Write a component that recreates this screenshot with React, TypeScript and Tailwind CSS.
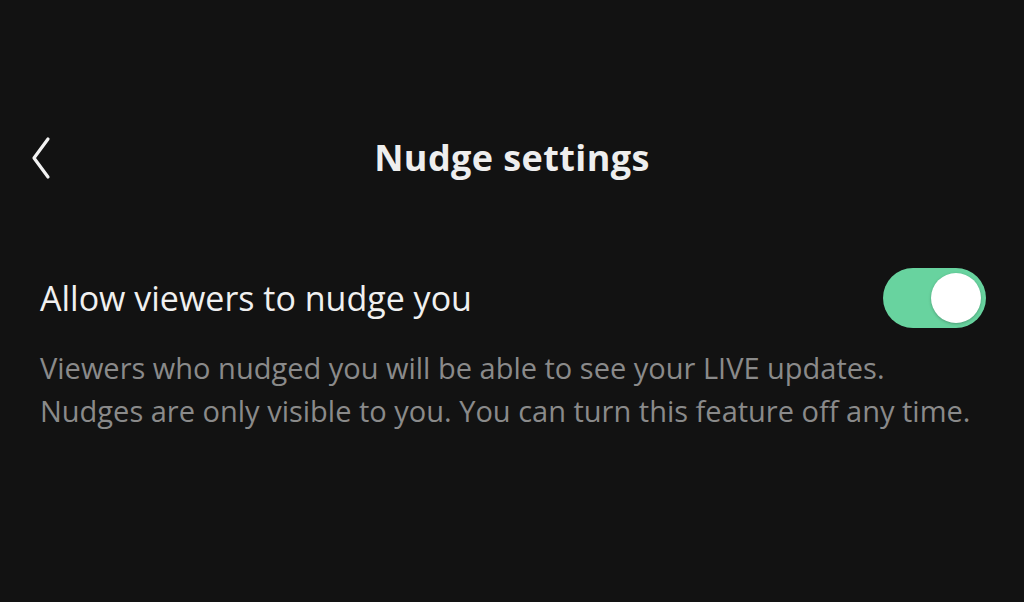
import { useState } from 'react'

const Toggle = ({ on, onChange }: { on: boolean; onChange: (v: boolean) => void }) => (
	<button
		onClick={() => onChange(!on)}
		className={`flex items-center w-[103px] h-[60px] rounded-full px-[5px] shrink-0 ${on ? 'bg-[#68d39f] justify-end' : 'bg-[#3a3a3a] justify-start'}`}
	>
		<span className="block w-[50px] h-[50px] rounded-full bg-white shadow-[0_1px_3px_rgba(0,0,0,0.25)]" />
	</button>
)

export default function App() {
	const [allow, setAllow] = useState(true)

	return (
		<div className="w-[1024px] h-[602px] bg-[#121212] text-white font-['Open_Sans',sans-serif] flex flex-col">
			<div className="grid grid-cols-[1fr_auto_1fr] items-center h-[80px] mt-[118px] px-[31px]">
				<button className="w-[20px] h-[44px]">
					<svg viewBox="0 0 20 44" className="w-full h-full" fill="none" stroke="#f2f2f2" strokeWidth="3.2" strokeLinecap="round" strokeLinejoin="round">
						<path d="M17 3 L3 22 L17 41" />
					</svg>
				</button>
				<h1 className="text-[36px] font-bold tracking-[0.4px] text-[#eeeeee]">Nudge settings</h1>
				<div />
			</div>
			<div className="pl-[40px] pr-[38px] flex flex-col">
				<div className="flex items-center justify-between mt-[70px]">
					<span className="text-[34px] text-[#f0f0f0]">Allow viewers to nudge you</span>
					<Toggle on={allow} onChange={setAllow} />
				</div>
				<p className="mt-[18px] text-[29px] leading-[43px] text-[#8a8a8a]">
					Viewers who nudged you will be able to see your LIVE updates.
					<br />
					Nudges are only visible to you. You can turn this feature off any time.
				</p>
			</div>
		</div>
	)
}
